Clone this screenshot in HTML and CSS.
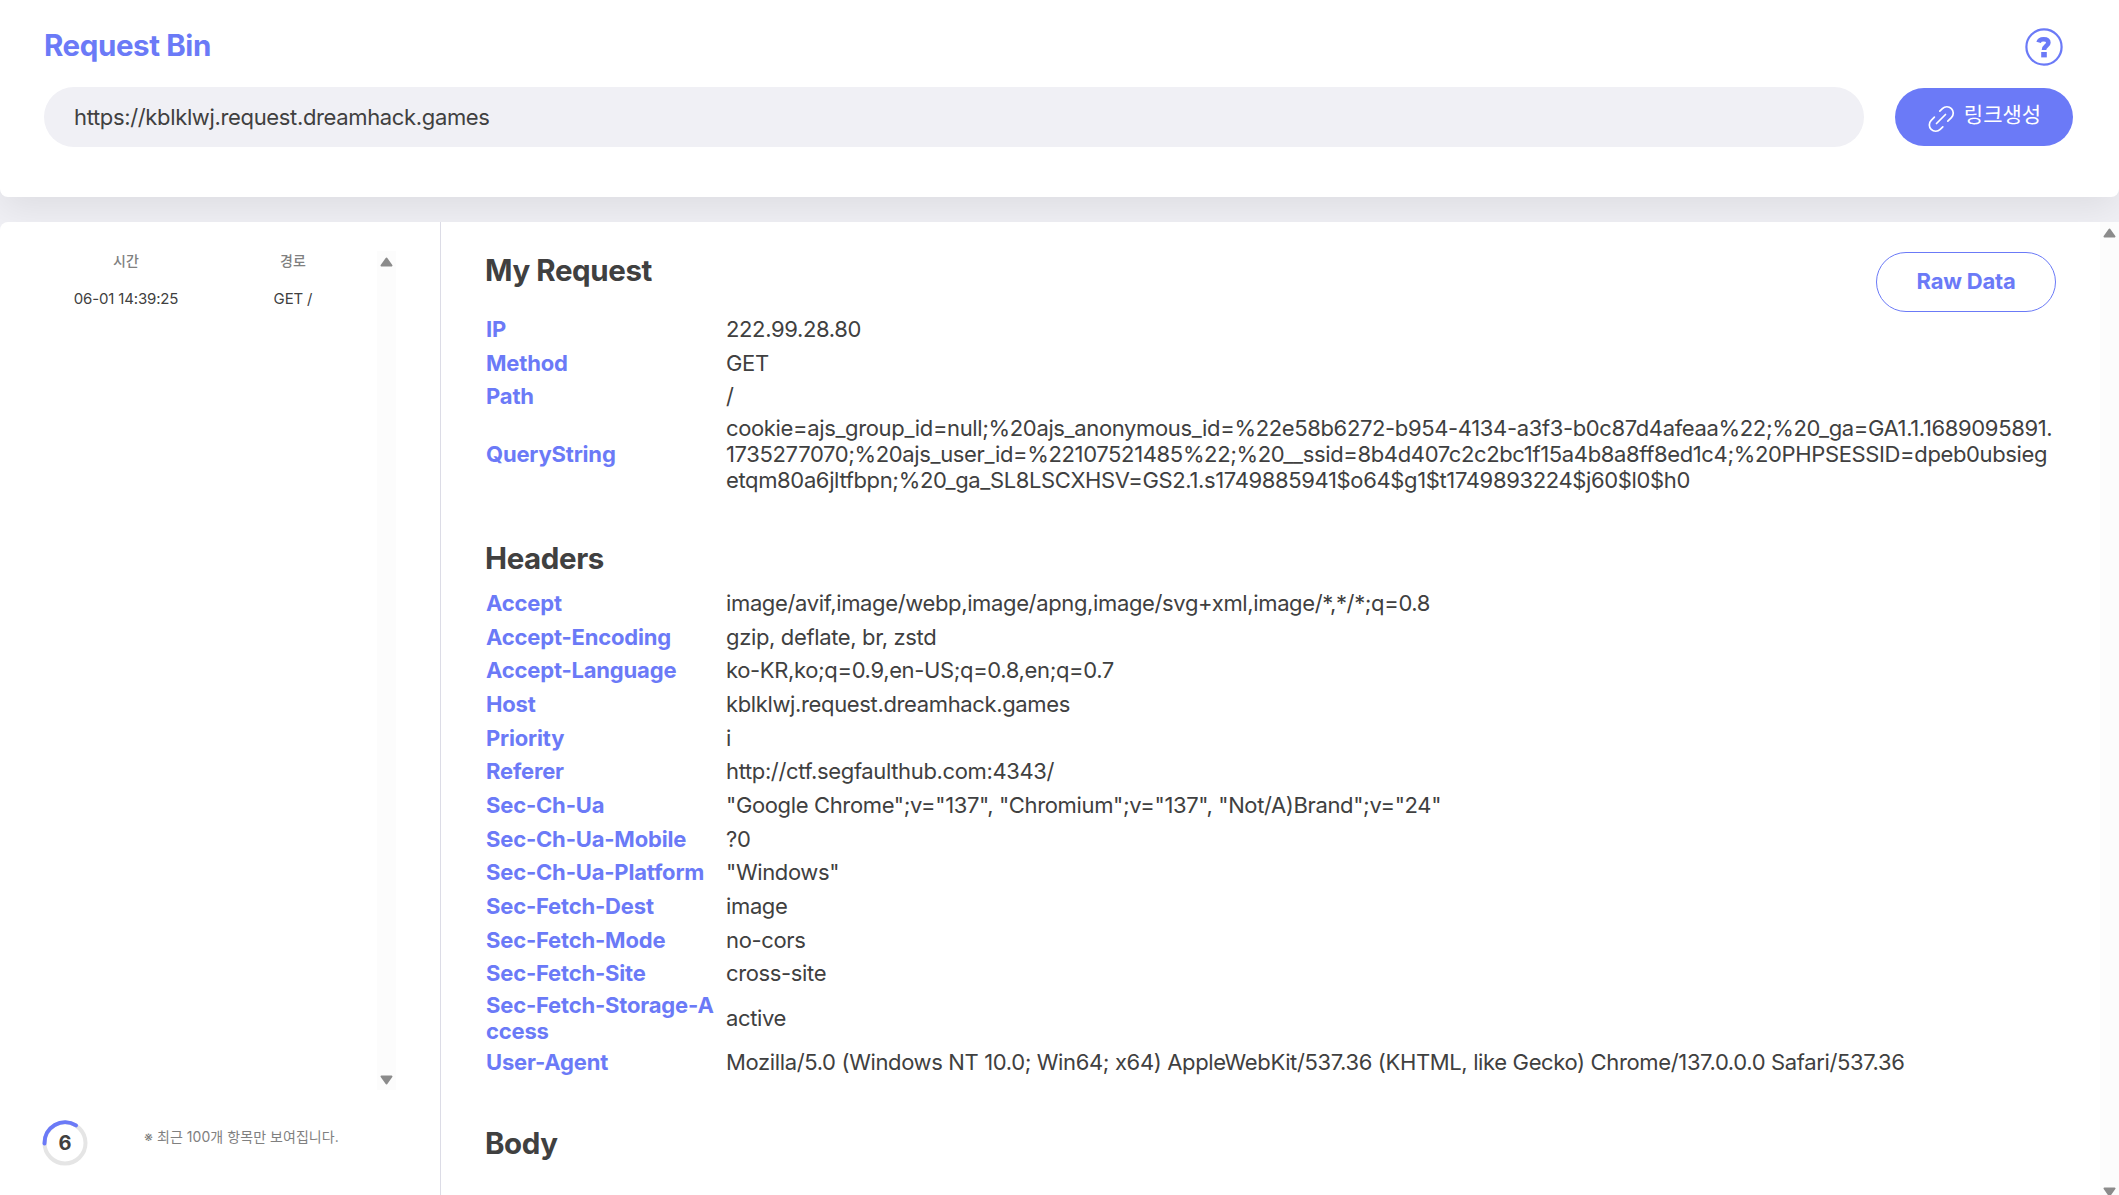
FILE: index.html
```html
<!DOCTYPE html>
<html lang="ko">
<head>
    <meta charset="UTF-8">
    <meta name="viewport" content="width=device-width, initial-scale=1.0">
    <title>Request Bin</title>
    <link rel="stylesheet" href="styles.css">
</head>
<body>
    <!-- Link bar -->
    <header class="top">
        <div class="top-row">
            <h1>Request Bin</h1>
            <svg class="help" width="38" height="38" viewBox="0 0 38 38">
                <circle cx="19" cy="19" r="17.6" fill="none" stroke="#6b7af7" stroke-width="2.2"/>
                <path d="M13.6 14.4c.6-2.3 2.4-3.1 5-3.1 2.9 0 4.8 1.2 4.8 3.4 0 3.2-4.4 3.2-4.4 7.3" fill="none" stroke="#6b7af7" stroke-width="4.6"/>
                <rect x="16.2" y="24" width="5.6" height="5.4" fill="#6b7af7"/>
            </svg>
        </div>
        <div class="link-row">
            <div class="link-box">https://kblklwj.request.dreamhack.games</div>
            <button class="create" type="button">
                <svg class="chain" width="28" height="28" viewBox="0 0 28 28" fill="none" stroke="#fff" stroke-width="1.7" stroke-linecap="round">
                    <path d="M12.8 6.2l2.6-2.6a6.1 6.1 0 0 1 9 9l-3.6 3.6"/>
                    <path d="M15.8 21.8l-2.6 2.6a6.1 6.1 0 0 1-9-9l3.2-3.2"/>
                    <path d="M9.5 18.5l9-9"/>
                </svg>
                <span>링크생성</span>
            </button>
        </div>
    </header>

    <div class="content">
        <!-- Request history -->
        <aside class="history">
            <div class="history-list">
                <div class="history-table">
                    <div class="history-head">시간</div>
                    <div class="history-head">경로</div>
                    <div>06-01 14:39:25</div>
                    <div>GET /</div>
                </div>
                <div class="scroll">
                    <svg width="13" height="10" viewBox="0 0 13 10"><path d="M6.5 1.5L11.5 8.5H1.5Z"/></svg>
                    <svg width="13" height="10" viewBox="0 0 13 10"><path d="M6.5 8.5L11.5 1.5H1.5Z"/></svg>
                </div>
            </div>
            <div class="history-foot">
                <div class="timer">
                    <svg width="46" height="46" viewBox="0 0 46 46" fill="none" stroke-width="4">
                        <circle cx="23" cy="23" r="20.5" stroke="#e5e5e5"/>
                        <path d="M2.5 23.5A20.5 20.5 0 0 1 34 5.4" stroke="#6b7af7" stroke-linecap="round"/>
                    </svg>
                    <span>6</span>
                </div>
                <p>※ 최근 100개 항목만 보여집니다.</p>
            </div>
        </aside>

        <!-- Selected request -->
        <main class="detail">
            <div class="detail-body">
                <div class="detail-title">
                    <h2>My Request</h2>
                    <button class="raw" type="button">Raw Data</button>
                </div>
                <dl>
                    <div><dt>IP</dt><dd>222.99.28.80</dd></div>
                    <div><dt>Method</dt><dd>GET</dd></div>
                    <div><dt>Path</dt><dd>/</dd></div>
                    <div><dt>QueryString</dt><dd>cookie=ajs_group_id=null;%20ajs_anonymous_id=%22e58b6272-b954-4134-a3f3-b0c87d4afeaa%22;%20_ga=GA1.1.1689095891.<br>1735277070;%20ajs_user_id=%22107521485%22;%20__ssid=8b4d407c2c2bc1f15a4b8a8ff8ed1c4;%20PHPSESSID=dpeb0ubsieg<br>etqm80a6jltfbpn;%20_ga_SL8LSCXHSV=GS2.1.s1749885941$o64$g1$t1749893224$j60$l0$h0</dd></div>
                </dl>

                <h2>Headers</h2>
                <dl>
                    <div><dt>Accept</dt><dd>image/avif,image/webp,image/apng,image/svg+xml,image/*,*/*;q=0.8</dd></div>
                    <div><dt>Accept-Encoding</dt><dd>gzip, deflate, br, zstd</dd></div>
                    <div><dt>Accept-Language</dt><dd>ko-KR,ko;q=0.9,en-US;q=0.8,en;q=0.7</dd></div>
                    <div><dt>Host</dt><dd>kblklwj.request.dreamhack.games</dd></div>
                    <div><dt>Priority</dt><dd>i</dd></div>
                    <div><dt>Referer</dt><dd>http://ctf.segfaulthub.com:4343/</dd></div>
                    <div><dt>Sec-Ch-Ua</dt><dd>"Google Chrome";v="137", "Chromium";v="137", "Not/A)Brand";v="24"</dd></div>
                    <div><dt>Sec-Ch-Ua-Mobile</dt><dd>?0</dd></div>
                    <div><dt>Sec-Ch-Ua-Platform</dt><dd>"Windows"</dd></div>
                    <div><dt>Sec-Fetch-Dest</dt><dd>image</dd></div>
                    <div><dt>Sec-Fetch-Mode</dt><dd>no-cors</dd></div>
                    <div><dt>Sec-Fetch-Site</dt><dd>cross-site</dd></div>
                    <div><dt>Sec-Fetch-Storage-A<br>ccess</dt><dd>active</dd></div>
                    <div><dt>User-Agent</dt><dd>Mozilla/5.0 (Windows NT 10.0; Win64; x64) AppleWebKit/537.36 (KHTML, like Gecko) Chrome/137.0.0.0 Safari/537.36</dd></div>
                </dl>

                <h2>Body</h2>
            </div>
            <div class="scroll">
                <svg width="13" height="10" viewBox="0 0 13 10"><path d="M6.5 1.5L11.5 8.5H1.5Z"/></svg>
                <svg width="13" height="10" viewBox="0 0 13 10"><path d="M6.5 8.5L11.5 1.5H1.5Z"/></svg>
            </div>
        </main>
    </div>
</body>
</html>
```

FILE: styles.css
```css
* {
    box-sizing: border-box;
}

body {
    margin: 0;
    height: 100vh;
    overflow: hidden;
    display: flex;
    flex-direction: column;
    gap: 25px;
    background: #f0f0f5;
    color: #404040;
    font-family: 'Inter', 'Noto Sans CJK KR', sans-serif;
    font-size: 22px;
    line-height: 26px;
}

h1, h2, p, dl, dd {
    margin: 0;
}

button {
    font: inherit;
    border-radius: 30px;
    white-space: nowrap;
}

/* Header */
.top {
    flex: none;
    height: 197px;
    padding: 27px 46px 0 44px;
    background: #fff;
    border-radius: 0 0 8px 8px;
    box-shadow: 0 12px 37px rgba(0, 0, 0, 0.08);
}

.top-row {
    display: flex;
    justify-content: space-between;
    height: 60px;
    padding-right: 10px;
}

h1, h2 {
    font-size: 29.5px;
    line-height: 36px;
    font-weight: 700;
    letter-spacing: -0.4px;
}

h1 {
    color: #6b7af7;
}

.help {
    margin-top: 1px;
}

.link-row {
    display: flex;
    align-items: center;
    gap: 31px;
}

.link-box {
    flex: 1;
    height: 60px;
    padding: 0 30px;
    line-height: 60px;
    letter-spacing: -0.35px;
    background: #f0f0f5;
    border-radius: 30px;
}

.create {
    width: 178px;
    height: 58px;
    padding: 0;
    display: flex;
    align-items: center;
    justify-content: center;
    gap: 9px;
    color: #fff;
    font-size: 21px;
    background: #6b7af7;
    border: none;
}

.create span {
    margin-top: -4px;
}

.chain {
    margin-top: 4px;
}

.content {
    flex: 1;
    min-height: 0;
    display: flex;
    background: #fff;
    border-radius: 8px 8px 0 0;
    /* stays above the header shadow */
    position: relative;
}

/* History */
.history {
    flex: none;
    width: 441px;
    padding: 29px 44px 0 43px;
    border-right: 1px solid #dcdce6;
}

.history-list {
    display: flex;
    height: 839px;
}

.history-table {
    width: 334px;
    display: grid;
    grid-template-columns: 166px 168px;
    grid-auto-rows: 38px;
    align-content: start;
    text-align: center;
    font-size: 15px;
    line-height: 20px;
    letter-spacing: -0.15px;
}

.history-head {
    color: #808080;
    font-weight: 500;
    font-size: 14px;
    letter-spacing: 0;
}

.scroll {
    flex: none;
    width: 19px;
    padding: 6px 0 5px;
    display: flex;
    flex-direction: column;
    align-items: center;
    justify-content: space-between;
    background: #fcfcfc;
}

.detail .scroll {
    padding-bottom: 0;
}

.detail .scroll svg:last-child {
    margin-bottom: -2px;
}

.scroll svg {
    fill: #8b8b8b;
    stroke: #8b8b8b;
    stroke-width: 2;
    stroke-linejoin: round;
}

.history-foot {
    display: flex;
    padding-top: 30px;
}

.timer {
    display: grid;
    place-items: center;
    width: 46px;
    height: 46px;
    margin-left: -1px;
    font-size: 20px;
    font-weight: 700;
}

.timer svg, .timer span {
    grid-area: 1 / 1;
}

.history-foot p {
    margin: 7px 0 0 56px;
    font-size: 14px;
    line-height: 20px;
    letter-spacing: 0.05px;
    color: #808080;
    white-space: nowrap;
}

/* Detail */
.detail {
    flex: 1;
    min-width: 0;
    display: flex;
}

.detail-body {
    flex: 1;
    min-width: 0;
    padding: 30px 44px 0;
}

.detail-title {
    display: flex;
    justify-content: space-between;
    height: 60px;
}

.raw {
    width: 180px;
    height: 60px;
    padding: 0 0 2px;
    color: #6b7af7;
    font-weight: 700;
    letter-spacing: -0.2px;
    background: #fff;
    border: 1px solid #6b7af7;
}

dl {
    margin-bottom: 46px;
    padding-left: 1px;
}

dl div {
    display: grid;
    grid-template-columns: 240px 1fr;
    align-items: center;
    min-height: 33.7px;
    padding: 1.5px 0;
}

dl + h2 {
    margin-bottom: 10px;
}

dt {
    color: #6b7af7;
    font-weight: 700;
    letter-spacing: -0.18px;
}

dd {
    letter-spacing: -0.36px;
    white-space: nowrap;
}
```
